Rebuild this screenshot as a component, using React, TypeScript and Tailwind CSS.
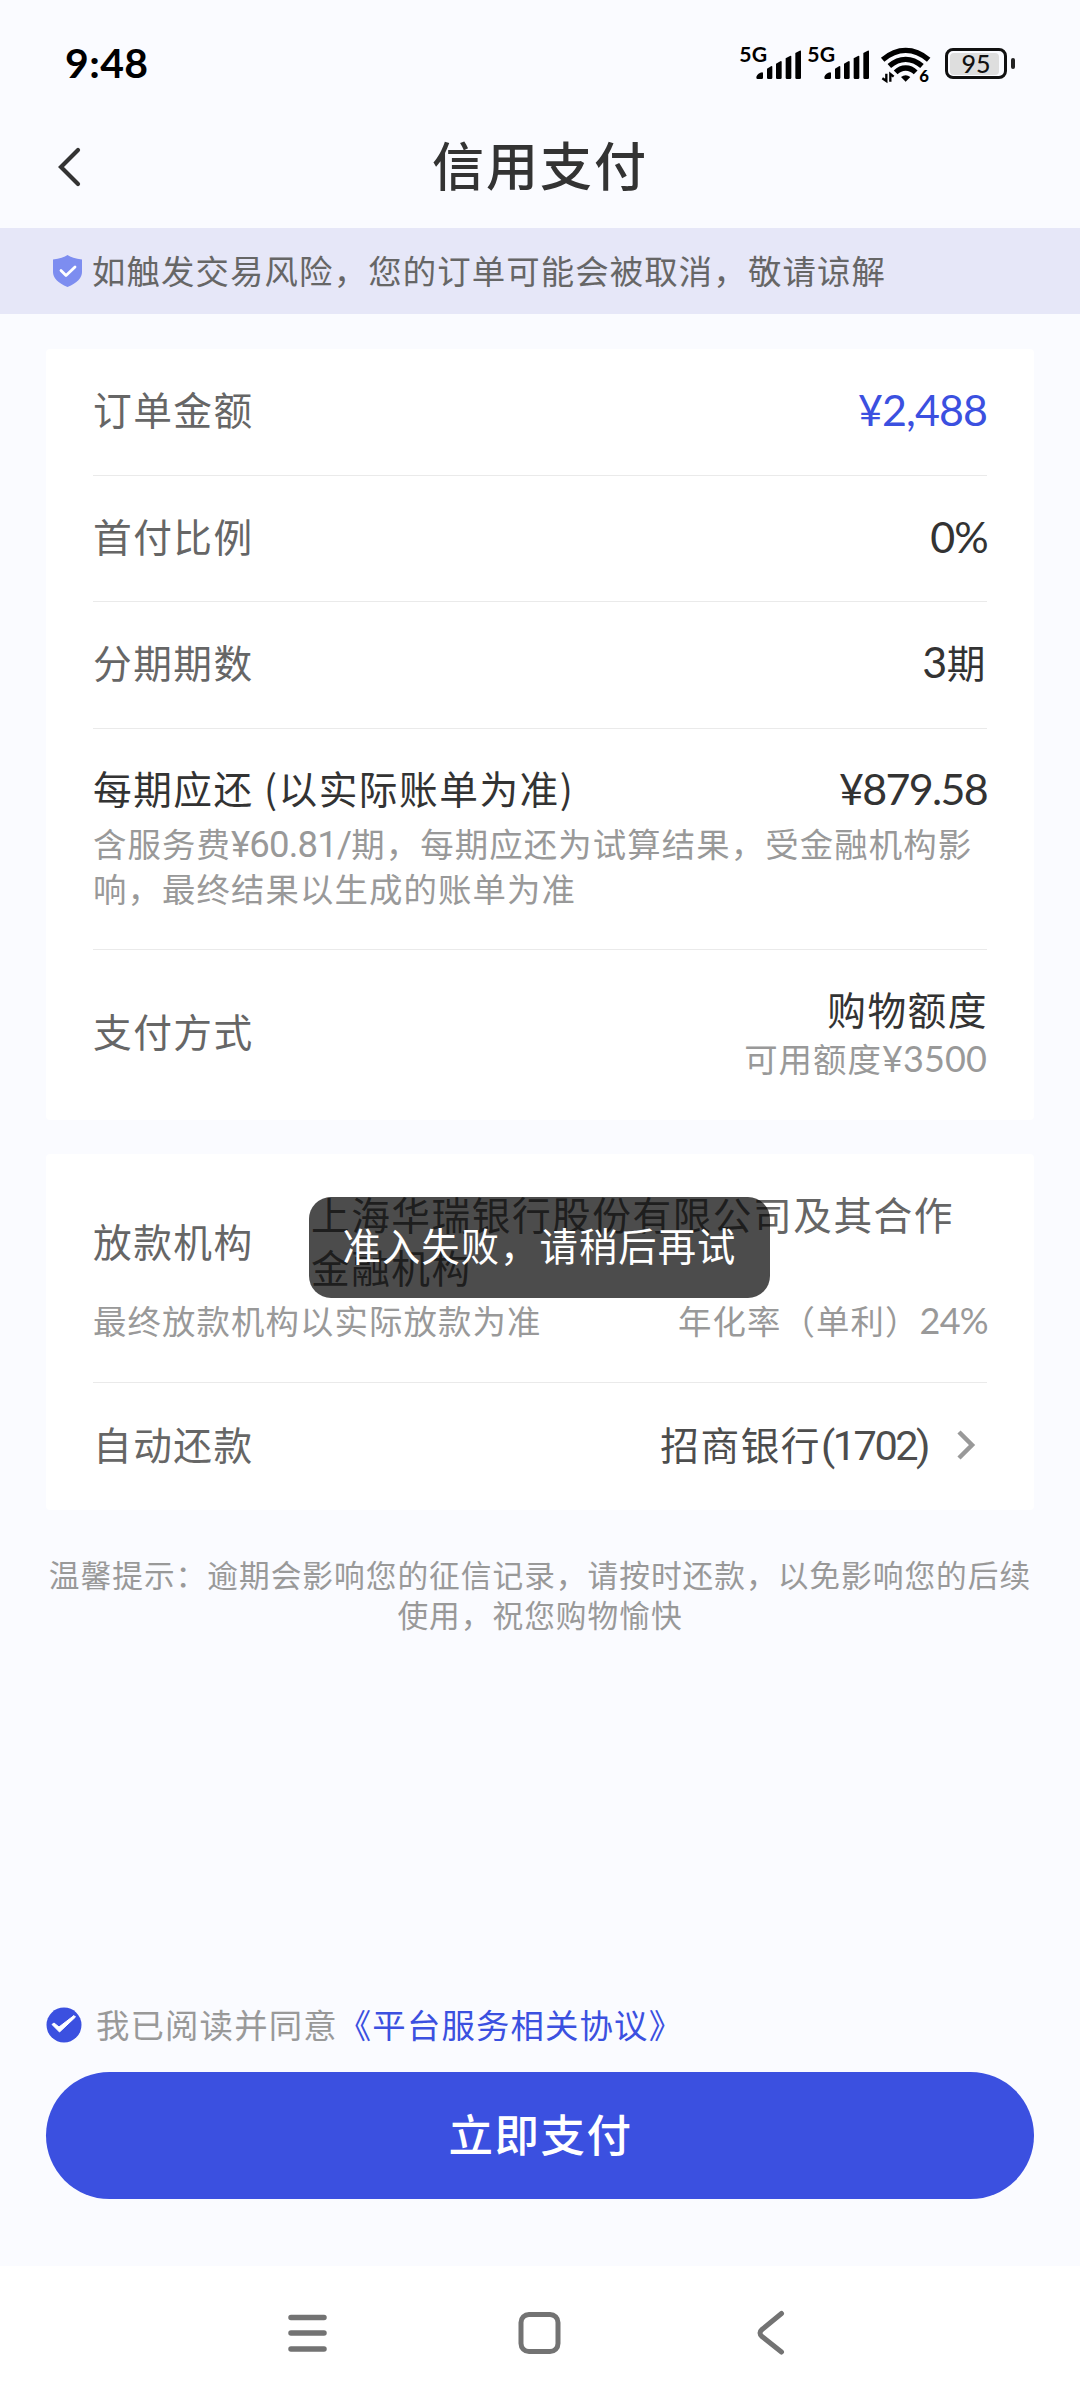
import type { ReactNode } from "react";

const LABEL = "text-[38.7px] leading-[54px] tracking-[1.5px] whitespace-nowrap";
const SMALL = "text-[33.4px] leading-[45.5px] tracking-[1.1px] text-[#999999] whitespace-nowrap";

function Num({ children, className = "" }: { children: ReactNode; className?: string }) {
  return <span className={`font-['Lato'] ${className}`}>{children}</span>;
}

function Signal() {
  return (
    <svg className="h-[36px] w-[62px] overflow-visible" viewBox="0 0 186 108" fill="#000">
      <text x="-2" y="47" fontFamily="Lato" fontWeight="700" fontSize="63" textLength="83" lengthAdjust="spacingAndGlyphs">
        5G
      </text>
      <path d="M49 95q0-9 12-15 8-4 8 2v13q0 4-4 4H53q-4 0-4-4z" />
      <path d="M81 68l12-7q4-2 4 2v32q0 4-4 4h-8q-4 0-4-4z" />
      <path d="M108 53l13-7q4-2 4 2v47q0 4-4 4h-9q-4 0-4-4z" />
      <path d="M137 37l13-7q4-2 4 2v63q0 4-4 4h-9q-4 0-4-4z" />
      <path d="M166 21l13-7q4-2 4 2v79q0 4-4 4h-9q-4 0-4-4z" />
    </svg>
  );
}

function Wifi() {
  return (
    <svg className="h-[38px] w-[50px] overflow-visible" viewBox="0 0 150 114">
      <g fill="none" stroke="#000" strokeWidth="16">
        <path d="M5 41Q38 13 74 13t69 28" />
        <path d="M25 60q23-20 49-20t49 20" />
        <path d="M44 79q13-13 30-13t30 13" />
      </g>
      <path d="M60 93q14-11 28 0L74 107z" fill="#000" />
      <path d="M16 83v22L4 97M28 107V84l10 8" fill="none" stroke="#000" strokeWidth="7" />
      <text x="115" y="109" fontFamily="Lato" fontWeight="900" fontSize="50">
        6
      </text>
    </svg>
  );
}

function Battery() {
  return (
    <div className="flex items-center">
      <div className="flex h-[31px] w-[62px] items-center rounded-[8px] border-[3px] border-[#111] p-[1.500px]">
        <div className="flex h-full w-[49px] items-center justify-center rounded-[4px] bg-[#dedede] pl-[4px] font-['Lato'] text-[25px] leading-none font-medium text-[#111]">
          95
        </div>
      </div>
      <div className="ml-[4px] h-[11px] w-[4px] rounded-full bg-[#222]" />
    </div>
  );
}

function Row({ label, children, last }: { label: string; children: ReactNode; last?: boolean }) {
  return (
    <div
      className={
        last
          ? "flex h-[126px] items-center justify-between pb-[7px]"
          : "flex h-[126.6px] items-center justify-between border-b-[1.5px] border-[#eaeaea] pb-[7px]"
      }
    >
      <span className={`${LABEL} text-[#666666]`}>{label}</span>
      {children}
    </div>
  );
}

export default function App() {
  return (
    <div className="relative flex h-[2400px] w-[1080px] flex-col bg-[#fafbff] font-['Noto_Sans_CJK_SC',sans-serif] text-[#333333]">
      <div className="flex h-[104px] justify-between pr-[65px] pl-[65px]">
        <div className="pt-[39px] font-['Lato'] text-[41px] leading-[48px] font-bold tracking-[0.4px] text-black">9:48</div>
        <div className="flex pt-[46px]">
          <div className="flex">
            <Signal />
            <div className="w-[6px]" />
            <Signal />
          </div>
          <div className="ml-[11px]">
            <Wifi />
          </div>
          <div className="ml-[14px] pt-[2px]">
            <Battery />
          </div>
        </div>
      </div>

      <header className="grid h-[124px] grid-cols-[1fr_auto_1fr] items-center">
        <svg className="mt-[2px] ml-[56px] h-[42px] w-[28px]" viewBox="0 0 28 42" fill="none" stroke="#333" strokeWidth="4.2" strokeLinecap="round">
          <path d="M22 4L5 21l17 17" />
        </svg>
        <h1 className="pb-[5px] text-[52px] leading-[70px] font-medium tracking-[2px]">信用支付</h1>
        <span />
      </header>

      <div className="flex h-[86px] items-center bg-[#e6e7f8] pl-[52px]">
        <svg className="h-[32px] w-[31px]" viewBox="0 0 31 32">
          <path d="M15.5 0Q20 3 30 4.500V17q0 9-14.500 15Q1 26 1 17V4.500Q11 3 15.500 0z" fill="#7d8df0" />
          <path d="M9 15.500l5 5 9-8.500" fill="none" stroke="#fff" strokeWidth="2.800" strokeLinecap="round" strokeLinejoin="round" />
        </svg>
        <span className="ml-[9px] pb-[3px] text-[33.4px] leading-[46px] tracking-[1.130px] text-[#666]">
          如触发交易风险，您的订单可能会被取消，敬请谅解
        </span>
      </div>

      <section className="mx-[46px] mt-[35px] h-[771px] rounded-[4px] bg-white pr-[47px] pl-[47px]">
        <Row label="订单金额">
          <Num className="mt-[3px] text-[43px] tracking-[-0.900px] text-[#3b50e0]">¥2,488</Num>
        </Row>
        <Row label="首付比例">
          <Num className="mt-[4px] -mr-[1px] text-[43px] tracking-[-0.800px]">0%</Num>
        </Row>
        <Row label="分期期数">
          <span className={LABEL}>
            <Num className="text-[43px] leading-none tracking-[-0.500px]">3</Num>期
          </span>
        </Row>
        <div className="h-[221.500px] border-b-[1.500px] border-[#eaeaea] pt-[31px]">
          <div className="flex justify-between">
            <span className={LABEL}>每期应还 (以实际账单为准)</span>
            <Num className="mt-[2px] text-[43px] leading-[54px] tracking-[-1.700px]">¥879.58</Num>
          </div>
          <p className={`${SMALL} mt-[4px]`}>
            含服务费<span className="font-['Roboto'] text-[36.500px] leading-none tracking-[-0.800px]">¥60.81/</span>期，每期应还为试算结果，受金融机构影
            <br />
            响，最终结果以生成的账单为准
          </p>
        </div>
        <div className="flex h-[170px] items-center justify-between pb-[10px]">
          <span className={`${LABEL} text-[#666666]`}>支付方式</span>
          <div className="text-right">
            <div className={`${LABEL} -mr-[1px]`}>购物额度</div>
            <div className={SMALL}>
              可用额度<Num className="text-[36px] leading-none tracking-[0.100px]">¥3500</Num>
            </div>
          </div>
        </div>
      </section>

      <section className="mx-[46px] mt-[34px] h-[356px] rounded-[4px] bg-white pr-[47px] pl-[47px]">
        <div className="h-[229px] border-b-[1.500px] border-[#eaeaea] pt-[33px]">
          <div className="flex items-center text-[#666666]">
            <span className={`${LABEL} w-[218px]`}>放款机构</span>
            <span className="text-[38.700px] leading-[53px] tracking-[1.500px]">
              上海华瑞银行股份有限公司及其合作
              <br />
              金融机构
            </span>
          </div>
          <div className="mt-[4px] flex justify-between">
            <span className={SMALL}>最终放款机构以实际放款为准</span>
            <span className={`${SMALL} -mr-[1px]`}>
              年化率（单利）<Num className="text-[36px] leading-none tracking-[-0.700px]">24%</Num>
            </span>
          </div>
        </div>
        <Row label="自动还款" last>
          <span className="flex items-center text-[#4d4d4d]">
            <span className={LABEL}>
              招商银行<span className="font-['Roboto'] text-[41.500px] leading-none tracking-[-2.500px]">(1702)</span>
            </span>
            <svg className="mt-[5px] mr-[9px] ml-[26px] h-[34px] w-[24px]" viewBox="0 0 24 34" fill="none" stroke="#999" strokeWidth="4.500">
              <path d="M5 4l13 13L5 30" />
            </svg>
          </span>
        </Row>
      </section>

      <p className="mt-[44px] text-center text-[30.700px] leading-[40px] tracking-[1px] text-[#999999]">
        温馨提示：逾期会影响您的征信记录，请按时还款，以免影响您的后续
        <br />
        使用，祝您购物愉快
      </p>

      <div className="mt-auto flex h-[70px] items-center px-[46px]">
        <svg className="h-[36px] w-[36px]" viewBox="0 0 36 36">
          <circle cx="18" cy="18" r="17.500" fill="#3b50e0" />
          <path d="M6 17.500l2-1.500 5 4L28 8.500l1.500 1.500L13.500 25z" fill="#fff" stroke="#fff" strokeWidth="1" strokeLinejoin="round" />
        </svg>
        <span className="ml-[14px] pb-[2px] text-[33.400px] leading-[46px] tracking-[1.150px] text-[#999999]">
          我已阅读并同意<span className="text-[#3b50e0]">《平台服务相关协议》</span>
        </span>
      </div>
      <button className="mx-[46px] mt-[12px] h-[127px] rounded-full bg-[#3b50e0] pb-[5px] pl-[1px] text-[44.500px] font-medium tracking-[1.500px] text-white">
        立即支付
      </button>

      <nav className="mt-[67px] flex h-[134px] shrink-0 items-center gap-[182px] bg-white pl-[284px]">
        <svg className="h-[50px] w-[48px]" viewBox="0 0 48 50" stroke="#737373" strokeWidth="5.500" strokeLinecap="round">
          <path d="M7 9.500h33M7 25h33M7 41h33" />
        </svg>
        <svg className="h-[50px] w-[50px]" viewBox="0 0 50 50" fill="none" stroke="#737373" strokeWidth="5">
          <rect x="7" y="6.500" width="37" height="37" rx="8" />
        </svg>
        <svg className="h-[50px] w-[50px]" viewBox="0 0 50 50" fill="none" stroke="#737373" strokeWidth="5" strokeLinecap="round">
          <path d="M35.500 5.500L16 21.500q-4 3.500 0 7L35.500 44" />
        </svg>
      </nav>

      <div className="absolute top-[1197px] left-[309px] flex h-[101px] w-[461px] items-center justify-center rounded-[22px] bg-black/70 pb-[5px] text-[38.300px] tracking-[1.100px] whitespace-nowrap text-white">
        准入失败，请稍后再试
      </div>
    </div>
  );
}
